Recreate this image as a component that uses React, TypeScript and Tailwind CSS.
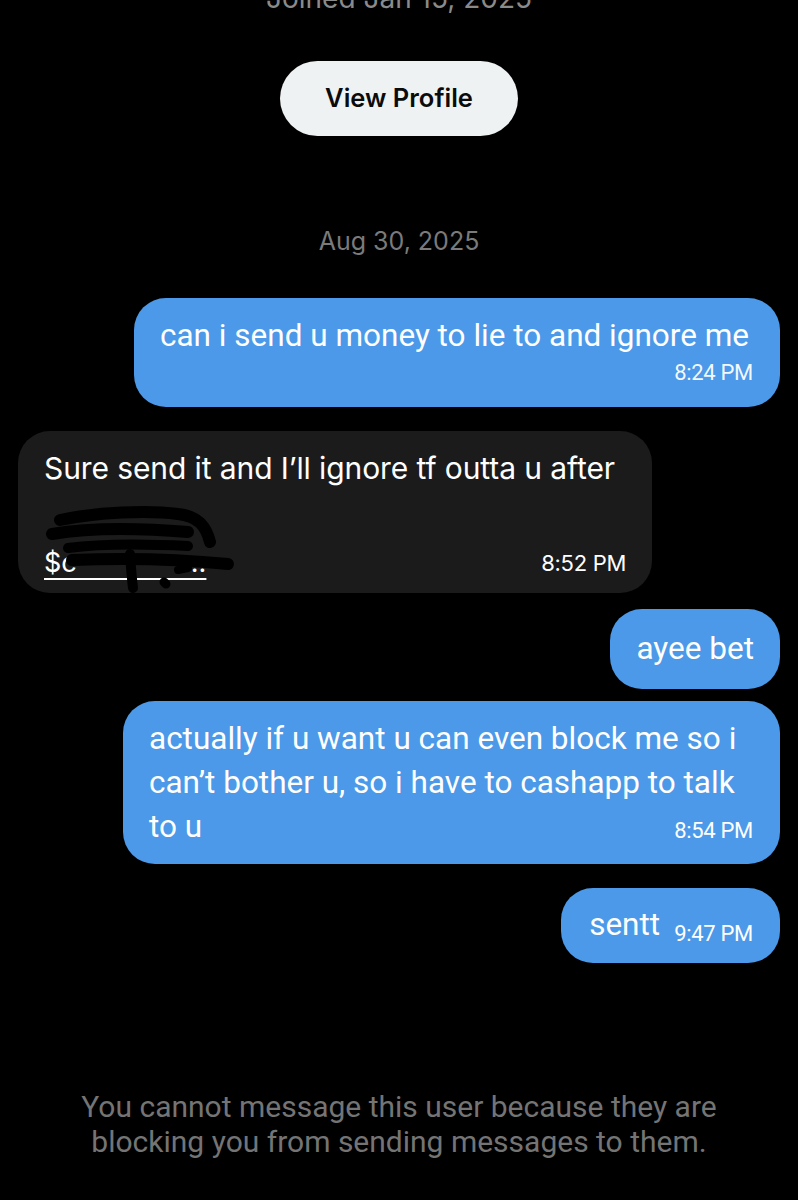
const sans = "font-['Roboto','Liberation_Sans',sans-serif]";

const Sent = ({
  children,
  time,
  className = "",
}: {
  children: React.ReactNode;
  time?: string;
  className?: string;
}) => (
  <div className="flex justify-end pr-[18px]">
    <div
      className={`bg-[#4b99e8] text-white rounded-[32px] ${sans} ${className}`}
    >
      {children}
      {time && (
        <div className="text-right text-[22px] leading-[26px] tracking-[-0.3px] text-white/95">
          {time}
        </div>
      )}
    </div>
  </div>
);

const App = () => {
  return (
    <div className="w-[798px] h-[1200px] bg-black overflow-hidden flex flex-col items-center font-['Inter','Liberation_Sans',sans-serif]">
      <div className="mt-[-20px] text-[28px] leading-[36px] text-[#8a8a8a]">
        Joined Jan 15, 2025
      </div>

      <button className="mt-[45px] w-[238px] h-[75px] rounded-full bg-[#eff2f3] text-[#0b0b0b] text-[25.5px] font-semibold">
        View Profile
      </button>

      <div className="mt-[90px] text-[25px] leading-[30px] text-[#7a7a7a]">
        Aug 30, 2025
      </div>

      <div className="w-full mt-[42px] flex flex-col">
        <Sent time="8:24 PM" className="w-[646px] pl-[26px] pr-[27px] pt-[20px] pb-[21px]">
          <div className="text-[31.5px] leading-[36px]">
            can i send u money to lie to and ignore me
          </div>
          <div className="mt-[6px]" />
        </Sent>

        <div className="mt-[24px] pl-[18px] flex">
          <div className="w-[634px] h-[162px] rounded-[32px] bg-[#1b1b1c] text-white pl-[26px] pr-[26px] pt-[19px]">
            <div className="text-[30px] leading-[36px] tracking-[-0.1px]">
              Sure send it and I’ll ignore tf outta u after
            </div>
            <div className="mt-[62px] flex items-end justify-between">
              <span className="relative text-[27px] leading-[30px] underline underline-offset-[6px]">
                $c&nbsp;&nbsp;&nbsp;&nbsp;&nbsp;&nbsp;&nbsp;&nbsp;&nbsp;&nbsp;&nbsp;&nbsp;&nbsp;&nbsp;...
                <svg
                  className="absolute left-[-6px] top-[-50px]"
                  width="200"
                  height="96"
                  viewBox="0 0 200 96"
                >
                  <g stroke="#000" strokeLinecap="round" fill="none">
                    <path d="M22 22 C 60 14, 110 12, 140 16 C 160 18, 168 28, 172 44" strokeWidth="12" />
                    <path d="M14 36 C 50 30, 100 30, 150 34" strokeWidth="12" />
                    <path d="M30 50 C 60 46, 110 46, 150 48" strokeWidth="10" />
                    <path d="M34 62 C 80 60, 130 60, 190 66" strokeWidth="12" />
                    <path d="M92 56 C 93 70, 94 82, 95 90" strokeWidth="10" />
                    <path d="M126 84 L 128 86" strokeWidth="9" />
                    <path d="M140 72 L 150 70" strokeWidth="8" />
                  </g>
                </svg>
              </span>
              <span className="text-[22px] leading-[26px] tracking-[-0.3px] mb-[2px]">8:52 PM</span>
            </div>
          </div>
        </div>

        <div className="mt-[16px]">
          <Sent className="px-[26px] py-[22px]">
            <div className="text-[31.5px] leading-[36px]">ayee bet</div>
          </Sent>
        </div>

        <div className="mt-[12px]">
          <Sent className="w-[657px] pl-[26px] pr-[27px] pt-[16px] pb-[15px]">
            <div className="text-[31.5px] leading-[44px]">
              actually if u want u can even block me so i can’t bother u, so i
              have to cashapp to talk
            </div>
            <div className="flex items-end justify-between">
              <span className="text-[31.5px] leading-[44px]">to u</span>
              <span className="mb-[5px] text-[22px] leading-[26px] tracking-[-0.3px]">
                8:54 PM
              </span>
            </div>
          </Sent>
        </div>

        <div className="mt-[24px]">
          <Sent className="pl-[28px] pr-[27px] pt-[19px] pb-[20px] flex items-end gap-[14px]">
            <div className="text-[31.5px] leading-[36px]">sentt</div>
            <div className="text-[22px] leading-[26px] tracking-[-0.3px] mb-[-4px]">9:47 PM</div>
          </Sent>
        </div>
      </div>

      <div className={`mt-[126px] text-center text-[30px] leading-[35px] text-[#747474] ${sans}`}>
        You cannot message this user because they are
        <br />
        blocking you from sending messages to them.
      </div>
    </div>
  );
};

export default App;
